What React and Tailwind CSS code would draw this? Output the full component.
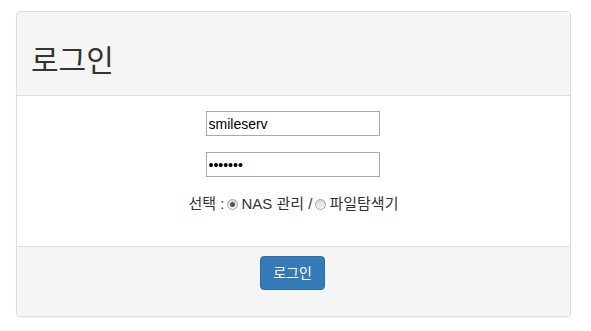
import { useState } from 'react'

const FONT = "'Liberation Sans', 'Noto Sans CJK KR', sans-serif"

function Radio({ checked, onClick }) {
  return (
    <span
      onClick={onClick}
      className="inline-flex items-center justify-center w-[11px] h-[11px] rounded-full border border-[#a8a8a8] bg-gradient-to-b from-[#d8d8d8] to-[#f6f6f6] mx-[3px] cursor-pointer"
    >
      {checked && <span className="w-[5px] h-[5px] rounded-full bg-[#555]" />}
    </span>
  )
}

export default function App() {
  const [mode, setMode] = useState('nas')

  return (
    <div className="w-[591px] h-[331px] bg-white pt-[11px] px-[16px]" style={{ fontFamily: FONT }}>
      <div className="w-[555px] border border-[#ddd] rounded-[4px] shadow-[0_1px_1px_rgba(0,0,0,0.05)] overflow-hidden text-[#333]">
        {/* Heading */}
        <div className="h-[84px] bg-[#f5f5f5] border-b border-[#ddd] flex items-center px-[14px] pt-[14px]">
          <h1 className="text-[30px] font-normal leading-none">로그인</h1>
        </div>

        {/* Body */}
        <div className="h-[150px] bg-white pt-[15px] flex flex-col items-center">
          <input
            type="text"
            defaultValue="smileserv"
            className="w-[174px] h-[25px] -ml-[2px] border border-[#a9a9a9] px-[2px] text-[14px] text-black outline-none"
          />
          <input
            type="password"
            defaultValue="1234567"
            className="w-[174px] h-[25px] -ml-[2px] mt-[16px] border border-[#a9a9a9] px-[2px] text-[14px] text-black outline-none"
          />
          <div className="mt-[17px] text-[15px] leading-[20px] flex items-center">
            <span>선택 :</span>
            <Radio checked={mode === 'nas'} onClick={() => setMode('nas')} />
            <span>NAS 관리 /</span>
            <Radio checked={mode === 'file'} onClick={() => setMode('file')} />
            <span>파일탐색기</span>
          </div>
        </div>

        {/* Footer */}
        <div className="h-[70px] bg-[#f5f5f5] border-t border-[#ddd] flex justify-center pt-[9px]">
          <button className="h-[34px] px-[12px] -ml-[2px] bg-[#337ab7] border border-[#2e6da4] rounded-[4px] text-white text-[14px] leading-none">
            로그인
          </button>
        </div>
      </div>
    </div>
  )
}
